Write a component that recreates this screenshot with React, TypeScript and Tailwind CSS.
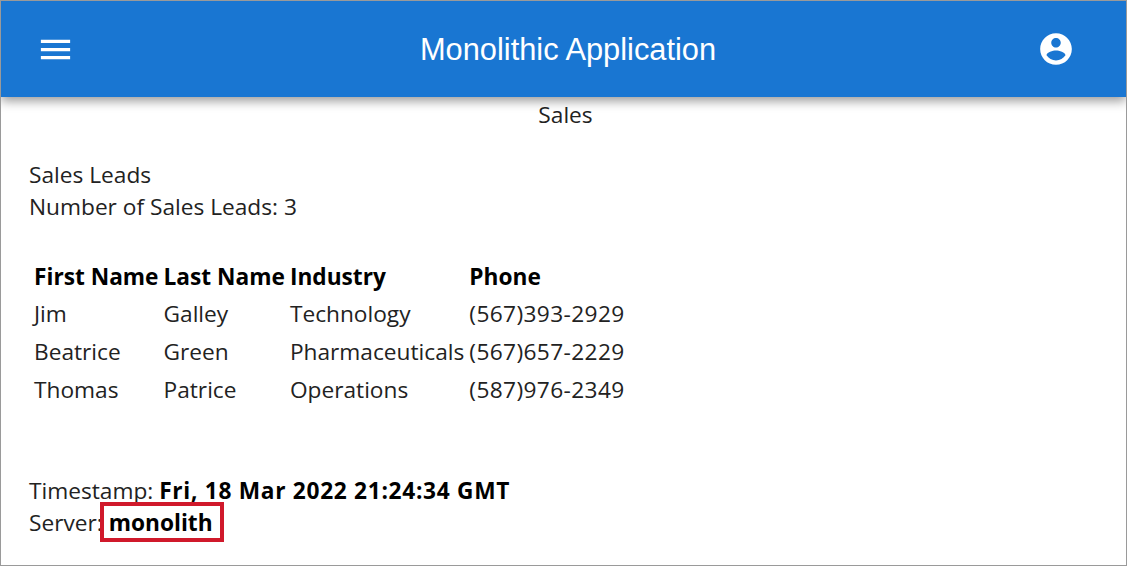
const ROWS = [
  ['Jim', 'Galley', 'Technology', '(567)393-2929'],
  ['Beatrice', 'Green', 'Pharmaceuticals', '(567)657-2229'],
  ['Thomas', 'Patrice', 'Operations', '(587)976-2349'],
];

export default function App() {
  return (
    <div className="h-[566px] w-[1127px] overflow-hidden bg-white border border-[#9a9a9a] font-['Open_Sans',sans-serif] text-[22.7px] leading-[32px] text-[#222]">
      <header className="relative flex h-[96px] items-center justify-between bg-[#1976d2] pl-[35px] pr-[51px] shadow-[0_4px_10px_rgba(0,0,0,0.4)]">
        <svg viewBox="0 0 24 24" className="h-[39px] w-[39px] fill-white">
          <path d="M3 18h18v-2H3v2zm0-5h18v-2H3v2zm0-7v2h18V6H3z" />
        </svg>
        <span className="ml-[24px] mt-[2px] font-['Liberation_Sans',sans-serif] text-[30.8px] text-white">Monolithic Application</span>
        <svg viewBox="0 0 24 24" className="h-[38px] w-[38px] fill-white">
          <path d="M12 2C6.48 2 2 6.48 2 12s4.48 10 10 10 10-4.48 10-10S17.52 2 12 2zm0 3c1.66 0 3 1.34 3 3s-1.34 3-3 3-3-1.34-3-3 1.34-3 3-3zm0 14.2c-2.5 0-4.71-1.28-6-3.22.03-1.99 4-3.08 6-3.08 1.99 0 5.97 1.09 6 3.08-1.29 1.94-3.5 3.22-6 3.22z" />
        </svg>
      </header>
      <div className="pl-[4px] pt-[2px] text-center">Sales</div>
      <div className="pl-[28px] pt-[28px]">
        <div>Sales Leads</div>
        <div>Number of Sales Leads: 3</div>
        <table className="mt-[32px] border-separate border-spacing-x-[5px] border-spacing-y-[6px]">
          <thead>
            <tr>
              {['First Name', 'Last Name', 'Industry', 'Phone'].map((h) => (
                <th key={h} className="text-left font-bold leading-[31px] text-black">{h}</th>
              ))}
            </tr>
          </thead>
          <tbody>
            {ROWS.map((r) => (
              <tr key={r[0]}>
                <td>{r[0]}</td>
                <td>{r[1]}</td>
                <td>{r[2]}</td>
                <td className="tracking-[0.38px]">{r[3]}</td>
              </tr>
            ))}
          </tbody>
        </table>
        <div className="mt-[63px]">
          Timestamp: <b className="tracking-[0.7px] text-black">Fri, 18 Mar 2022 21:24:34 GMT</b>
        </div>
        <div>
          Server:{' '}
          <span className="relative font-bold text-black">
            monolith
            <span className="absolute -bottom-[4px] -left-[9px] -right-[11px] -top-[5px] border-[4px] border-[#d0192b]" />
          </span>
        </div>
      </div>
    </div>
  );
}
